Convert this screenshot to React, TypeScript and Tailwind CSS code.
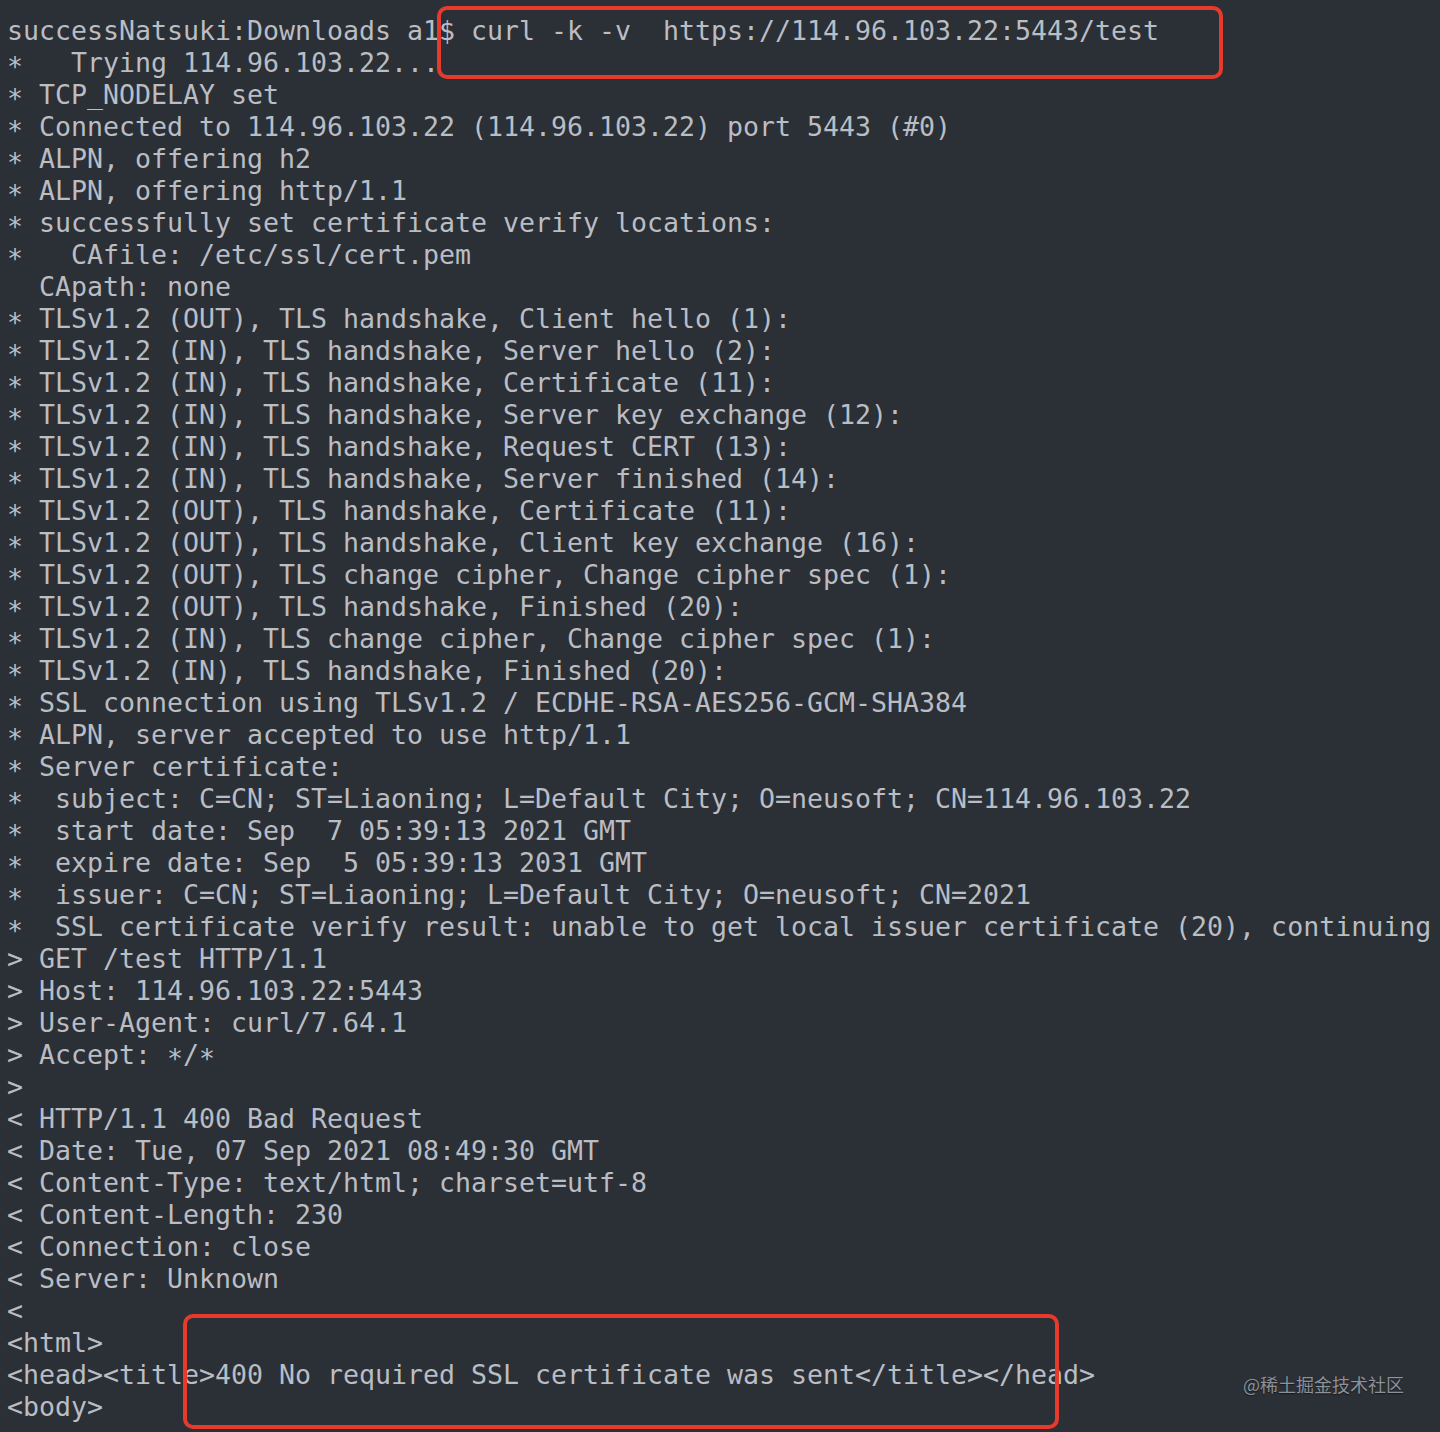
import React from 'react';

const lines: string[] = [
  'successNatsuki:Downloads a1$ curl -k -v  https://114.96.103.22:5443/test',
  '*   Trying 114.96.103.22...',
  '* TCP_NODELAY set',
  '* Connected to 114.96.103.22 (114.96.103.22) port 5443 (#0)',
  '* ALPN, offering h2',
  '* ALPN, offering http/1.1',
  '* successfully set certificate verify locations:',
  '*   CAfile: /etc/ssl/cert.pem',
  '  CApath: none',
  '* TLSv1.2 (OUT), TLS handshake, Client hello (1):',
  '* TLSv1.2 (IN), TLS handshake, Server hello (2):',
  '* TLSv1.2 (IN), TLS handshake, Certificate (11):',
  '* TLSv1.2 (IN), TLS handshake, Server key exchange (12):',
  '* TLSv1.2 (IN), TLS handshake, Request CERT (13):',
  '* TLSv1.2 (IN), TLS handshake, Server finished (14):',
  '* TLSv1.2 (OUT), TLS handshake, Certificate (11):',
  '* TLSv1.2 (OUT), TLS handshake, Client key exchange (16):',
  '* TLSv1.2 (OUT), TLS change cipher, Change cipher spec (1):',
  '* TLSv1.2 (OUT), TLS handshake, Finished (20):',
  '* TLSv1.2 (IN), TLS change cipher, Change cipher spec (1):',
  '* TLSv1.2 (IN), TLS handshake, Finished (20):',
  '* SSL connection using TLSv1.2 / ECDHE-RSA-AES256-GCM-SHA384',
  '* ALPN, server accepted to use http/1.1',
  '* Server certificate:',
  '*  subject: C=CN; ST=Liaoning; L=Default City; O=neusoft; CN=114.96.103.22',
  '*  start date: Sep  7 05:39:13 2021 GMT',
  '*  expire date: Sep  5 05:39:13 2031 GMT',
  '*  issuer: C=CN; ST=Liaoning; L=Default City; O=neusoft; CN=2021',
  '*  SSL certificate verify result: unable to get local issuer certificate (20), continuing',
  '> GET /test HTTP/1.1',
  '> Host: 114.96.103.22:5443',
  '> User-Agent: curl/7.64.1',
  '> Accept: */*',
  '>',
  '< HTTP/1.1 400 Bad Request',
  '< Date: Tue, 07 Sep 2021 08:49:30 GMT',
  '< Content-Type: text/html; charset=utf-8',
  '< Content-Length: 230',
  '< Connection: close',
  '< Server: Unknown',
  '<',
  '<html>',
  '<head><title>400 No required SSL certificate was sent</title></head>',
  '<body>',
];

const TermLine: React.FC<{ text: string }> = ({ text }) => {
  const parts = text.split(/(\*)/);
  return (
    <div className="h-8">
      {parts.map((p, i) =>
        p === '*' ? (
          <span key={i} className="inline-block translate-y-[4px]">*</span>
        ) : (
          <span key={i}>{p}</span>
        )
      )}
    </div>
  );
};

const App: React.FC = () => {
  return (
    <div className="relative w-[1440px] h-[1432px] overflow-hidden bg-[#2b2f36]">
      <div className="pt-[15px] pl-[7px] whitespace-pre text-[#babdc4] text-[26.58px] leading-8 font-['DejaVu_Sans_Mono',monospace]">
        {lines.map((l, i) => (
          <TermLine key={i} text={l} />
        ))}
      </div>

      {/* highlight boxes drawn over the output */}
      <div className="absolute left-[437px] top-[6px] w-[786px] h-[73px] rounded-[10px] border-[4px] border-[#e63a2c]" />
      <div className="absolute left-[183px] top-[1314px] w-[876px] h-[115px] rounded-[10px] border-[4px] border-[#e63a2c]" />

      <div className="absolute left-[1243px] top-[1372px] text-[18px] leading-6 text-[#8e9197] font-['Noto_Sans_CJK_SC',sans-serif] [text-shadow:0_1px_1px_rgba(0,0,0,0.5)]">
        @稀土掘金技术社区
      </div>
    </div>
  );
};

export default App;
